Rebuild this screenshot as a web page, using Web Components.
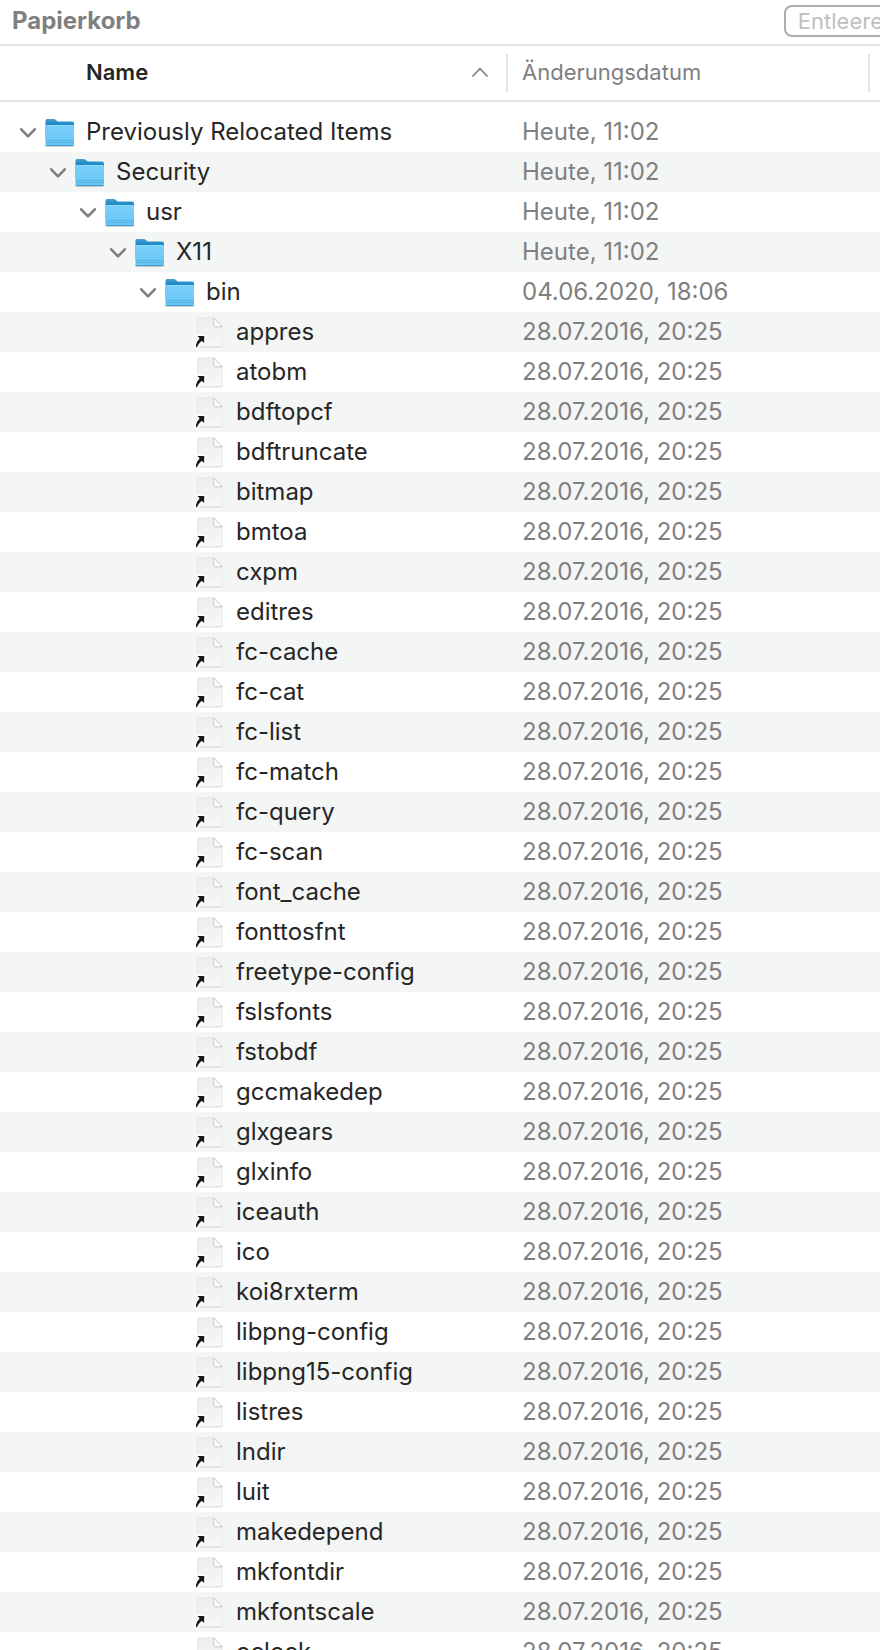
<!DOCTYPE html>
<html lang="de">
<head>
<meta charset="utf-8">
<meta name="viewport" content="width=device-width, initial-scale=1">
<title>Papierkorb</title>
<style>
  body {
    margin: 0;
    height: 100vh;
    overflow: hidden;
    background: #fff;
    font-family: Inter, "Liberation Sans", sans-serif;
  }
</style>
</head>
<body>
<finder-window>
  <title-bar slot="title">
    Papierkorb
    <span slot="action">Entleeren</span>
  </title-bar>
  <file-list></file-list>
</finder-window>

<script>
const DAY = 'Heute, 11:02';
const BUILD = '28.07.2016, 20:25';

const FOLDERS = [
  ['Previously Relocated Items', DAY],
  ['Security', DAY],
  ['usr', DAY],
  ['X11', DAY],
  ['bin', '04.06.2020, 18:06']
];

const FILES = [
  'appres', 'atobm', 'bdftopcf', 'bdftruncate', 'bitmap', 'bmtoa', 'cxpm',
  'editres', 'fc-cache', 'fc-cat', 'fc-list', 'fc-match', 'fc-query',
  'fc-scan', 'font_cache', 'fonttosfnt', 'freetype-config', 'fslsfonts',
  'fstobdf', 'gccmakedep', 'glxgears', 'glxinfo', 'iceauth', 'ico',
  'koi8rxterm', 'libpng-config', 'libpng15-config', 'listres', 'lndir',
  'luit', 'makedepend', 'mkfontdir', 'mkfontscale', 'oclock'
];

class FinderWindow extends HTMLElement {
  constructor () {
    super();
    this.attachShadow({ mode: 'open' });
    // the window hangs a little over the right edge of the screen
    this.shadowRoot.innerHTML = `
      <style>
        :host {
          display: flex;
          flex-direction: column;
          width: calc(100% + 48px);
        }
      </style>
      <slot name="title"></slot>
      <slot></slot>
    `;
  }
}

class TitleBar extends HTMLElement {
  constructor () {
    super();
    this.attachShadow({ mode: 'open' });
    this.shadowRoot.innerHTML = `
      <style>
        :host {
          display: flex;
          align-items: center;
          justify-content: space-between;
          box-sizing: border-box;
          height: 46px;
          padding: 0 18px 2px 12px;
          border-bottom: 2px solid #e2e2e2;
        }

        h1 {
          margin: 0;
          color: #808080;
          font-size: 24px;
          font-weight: 700;
          line-height: 32px;
        }

        button {
          box-sizing: border-box;
          height: 32px;
          padding: 0 12px;
          border: 2px solid #adadad;
          border-radius: 8px;
          background: #fff;
          color: #bfbfbf;
          font: inherit;
          font-size: 22px;
          line-height: 28px;
        }
      </style>
      <h1><slot></slot></h1>
      <button type="button" disabled><slot name="action"></slot></button>
    `;
  }
}

class FileIcon extends HTMLElement {
  constructor () {
    super();
    this.attachShadow({ mode: 'open' });
  }

  connectedCallback () {
    this.shadowRoot.innerHTML = `
      <style>
        :host {
          display: block;
          flex: none;
          width: 32px;
          height: 32px;
        }

        svg {
          display: block;
          overflow: visible;
        }
      </style>
      ${this.getAttribute('kind') === 'folder' ? this.folder() : this.alias()}
    `;
  }

  folder () {
    return `
      <svg width="32" height="32" viewBox="0 0 32 32" aria-hidden="true">
        <defs>
          <linearGradient id="back" x1="0" y1="0" x2="0" y2="1">
            <stop offset="0" stop-color="#4a9fcd"/>
            <stop offset=".25" stop-color="#1e8ac6"/>
          </linearGradient>
          <linearGradient id="front" x1="0" y1="0" x2="0" y2="1">
            <stop offset="0" stop-color="#7ad1fa"/>
            <stop offset="1" stop-color="#66c5f3"/>
          </linearGradient>
        </defs>
        <path d="M1 28.500q0 2.300 1.800 2.300h25.800q1.800 0 1.800-2.300z" fill="#000" fill-opacity=".25"/>
        <path d="M1.500 4.600q0-1.600 1.600-1.600h6.700q1 0 1.800.7l1.500 1.200q.8.700 1.800.7h13.200q1.900 0 1.900 1.900v15H1.500z" fill="url(#back)"/>
        <path d="M1.500 10.700q0-1.700 1.700-1.700h25.100q1.700 0 1.700 1.700v17.600q0 1.600-1.700 1.600H3.200q-1.700 0-1.700-1.600z" fill="url(#front)"/>
        <path d="M2.300 9.500h27" stroke="#94dbfc" stroke-width=".8"/>
        <path d="M1.700 24.500h28.200M1.700 26.500h28.200" stroke="#4bb0e0" stroke-width=".7"/>
        <path d="M2.500 29.500h26.500" stroke="#3c98c8" stroke-width=".9"/>
      </svg>
    `;
  }

  alias () {
    return `
      <svg width="32" height="32" viewBox="0 0 32 32" aria-hidden="true">
        <defs>
          <linearGradient id="page" x1="0" y1="0" x2="0" y2="1">
            <stop offset="0" stop-color="#ececec"/>
            <stop offset="1" stop-color="#f8f8f8"/>
          </linearGradient>
        </defs>
        <path d="M4.500 30.900h22.100q1.600 0 1.600-1.600" fill="none" stroke="#000" stroke-opacity=".2" stroke-width=".9"/>
        <path d="M3.500 3q0-1.200 1.200-1.200h15.100L28.300 10.800v18q0 1.700-1.700 1.700H5.200q-1.700 0-1.700-1.700z" fill="url(#page)" stroke="#dcdcdc" stroke-width=".5"/>
        <path d="M19.800 1.800v7.500q0 1.500 1.500 1.500h7z" fill="#fbfbfb" stroke="#b8b8b8" stroke-width=".7"/>
        <path d="M3.500 20H10.200V26.900L8 24.900Q4.700 26.500 3 31.200L2 30.900Q1.800 26 5.700 22.400z" fill="#fff" stroke="#fff" stroke-width="2.600" stroke-linejoin="round"/>
        <path d="M3.500 20H10.200V26.900L8 24.900Q4.700 26.500 3 31.200L2 30.900Q1.800 26 5.700 22.400z" fill="#17171c"/>
      </svg>
    `;
  }
}

class FileEntry extends HTMLElement {
  constructor () {
    super();
    this.attachShadow({ mode: 'open' });
  }

  connectedCallback () {
    const kind = this.getAttribute('kind');
    const level = Number(this.getAttribute('level'));

    this.shadowRoot.innerHTML = `
      <style>
        :host {
          display: flex;
          align-items: center;
          height: 40px;
          padding-left: calc(16px + ${level} * 30px);
          white-space: nowrap;
        }

        button,
        .spacer {
          flex: none;
          width: 24px;
          height: 24px;
          margin-right: 4px;
          padding: 0;
          border: 0;
          background: none;
        }

        button svg {
          display: block;
        }

        button[aria-expanded="false"] svg {
          transform: rotate(-90deg);
        }

        .name {
          margin-left: 10px;
        }
      </style>
      ${kind === 'folder' ? `
        <button type="button" aria-expanded="true" aria-labelledby="name">
          <svg width="24" height="24" viewBox="0 0 24 24" aria-hidden="true">
            <path d="M5.200 9.300l6.800 7 6.800-7" fill="none" stroke="#7f7f7f" stroke-width="2.600" stroke-linecap="round" stroke-linejoin="round"/>
          </svg>
        </button>` : '<span class="spacer"></span>'}
      <file-icon kind="${kind}"></file-icon>
      <span class="name" id="name"><slot></slot></span>
    `;

    const button = this.shadowRoot.querySelector('button');
    if (button) {
      button.addEventListener('click', () => {
        const open = button.getAttribute('aria-expanded') !== 'true';
        button.setAttribute('aria-expanded', String(open));
        this.dispatchEvent(new CustomEvent('toggle-folder', { bubbles: true, detail: { level, open } }));
      });
    }
  }
}

class FileList extends HTMLElement {
  constructor () {
    super();
    this.closed = new Set();
    this.attachShadow({ mode: 'open' });

    const rows = FOLDERS.map(([name, date], level) => this.row('folder', name, date, level))
      .concat(FILES.map(name => this.row('alias', name, BUILD, FOLDERS.length)));

    this.shadowRoot.innerHTML = `
      <style>
        :host {
          display: block;
        }

        table {
          width: 100%;
          border-spacing: 0;
          table-layout: fixed;
        }

        .col-date {
          width: 362px;
        }

        .col-more {
          width: 58px;
        }

        th {
          padding: 8px 0;
          border-bottom: 2px solid #e2e2e2;
          color: #7f7f7f;
          font-size: 22px;
          font-weight: 400;
          text-align: left;
        }

        .head {
          display: flex;
          align-items: center;
          justify-content: space-between;
          box-sizing: border-box;
          height: 38px;
          padding: 0 18px 2px 14px;
          border-right: 2px solid #e2e2e2;
        }

        .head.sorted {
          width: 100%;
          padding: 0 18px 2px 86px;
          border-width: 0 2px 0 0;
          border-style: solid;
          border-color: #e2e2e2;
          background: none;
          color: #262626;
          font: inherit;
          font-weight: 600;
        }

        tbody::before {
          content: "";
          display: block;
          height: 10px;
        }

        td {
          padding: 0;
          color: #262626;
          font-size: 24px;
          line-height: 40px;
        }

        td.date {
          padding-left: 14px;
          color: #7f7f7f;
          white-space: nowrap;
        }

        tr.shaded td {
          background: #f4f6f5;
        }
      </style>
      <table>
        <colgroup>
          <col>
          <col class="col-date">
          <col class="col-more">
        </colgroup>
        <thead>
          <tr>
            <th scope="col" aria-sort="ascending">
              <button type="button" class="head sorted">
                Name
                <svg width="16" height="10" viewBox="0 0 16 10" aria-hidden="true">
                  <path d="M1 9l7-7.500L15 9" fill="none" stroke="#7f7f7f" stroke-width="1.700" stroke-linecap="round" stroke-linejoin="round"/>
                </svg>
              </button>
            </th>
            <th scope="col"><div class="head">Änderungsdatum</div></th>
            <th></th>
          </tr>
        </thead>
        <tbody>${rows.join('')}</tbody>
      </table>
    `;

    this.shadowRoot.addEventListener('toggle-folder', this.toggleFolder.bind(this));
    this.stripe();
  }

  row (kind, name, date, level) {
    return `
      <tr data-level="${level}">
        <td><file-entry kind="${kind}" level="${level}">${name}</file-entry></td>
        <td class="date">${date}</td>
        <td></td>
      </tr>
    `;
  }

  toggleFolder (event) {
    const { level, open } = event.detail;
    if (open) {
      this.closed.delete(level);
    } else {
      this.closed.add(level);
    }
    const limit = Math.min(...this.closed);
    this.shadowRoot.querySelectorAll('tbody tr').forEach(tr => {
      tr.hidden = Number(tr.dataset.level) > limit;
    });
    this.stripe();
  }

  stripe () {
    const visible = this.shadowRoot.querySelectorAll('tbody tr:not([hidden])');
    visible.forEach((tr, i) => tr.classList.toggle('shaded', i % 2 === 1));
  }
}

customElements.define('file-icon', FileIcon);
customElements.define('file-entry', FileEntry);
customElements.define('file-list', FileList);
customElements.define('title-bar', TitleBar);
customElements.define('finder-window', FinderWindow);
</script>
</body>
</html>
